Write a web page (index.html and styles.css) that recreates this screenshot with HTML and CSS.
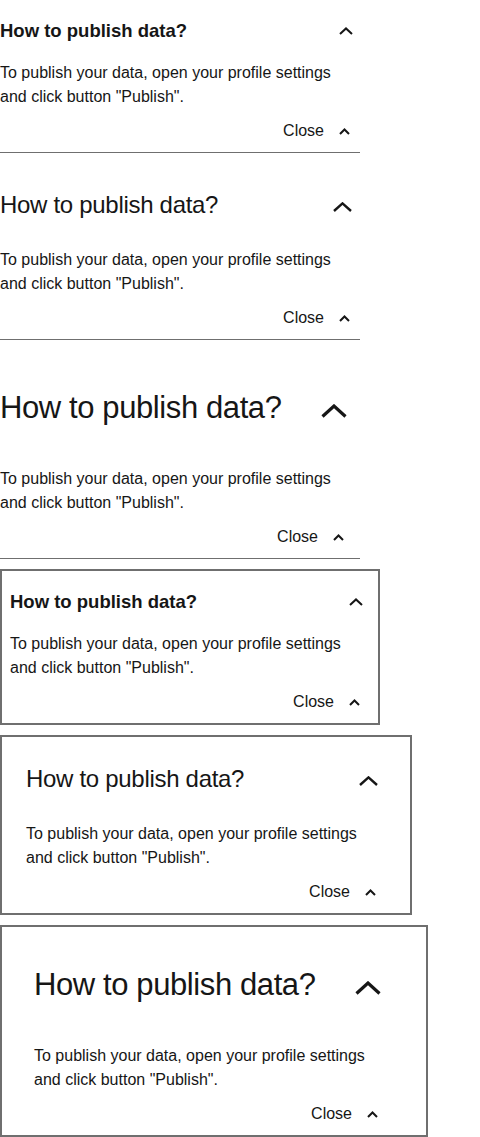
FILE: index.html
```html
<!DOCTYPE html>
<html lang="en">
<head>
<meta charset="utf-8">
<title>Accordion</title>
<link rel="stylesheet" href="styles.css">
</head>
<body>
<main class="page">
  <section class="acc acc--sm">
    <div class="acc__head">
      <h2 class="acc__title">How to publish data?</h2>
      <span class="acc__toggle"><svg width="14" height="8" viewBox="0 0 14 8"><path d="M1 7L7 1.4L13 7" fill="none" stroke="#161616" stroke-width="2"/></svg></span>
    </div>
    <p class="acc__body">To publish your data, open your profile settings and click button "Publish".</p>
    <div class="acc__foot"><span class="acc__close">Close</span><span class="acc__closeicon"><svg width="11" height="7" viewBox="0 0 11 7"><path d="M1 6L5.5 1.5L10 6" fill="none" stroke="#161616" stroke-width="2"/></svg></span></div>
  </section>

  <section class="acc acc--md">
    <div class="acc__head">
      <h2 class="acc__title">How to publish data?</h2>
      <span class="acc__toggle"><svg width="19" height="10" viewBox="0 0 19 10"><path d="M1 9L9.5 1.4L18 9" fill="none" stroke="#161616" stroke-width="2.4"/></svg></span>
    </div>
    <p class="acc__body">To publish your data, open your profile settings and click button "Publish".</p>
    <div class="acc__foot"><span class="acc__close">Close</span><span class="acc__closeicon"><svg width="11" height="7" viewBox="0 0 11 7"><path d="M1 6L5.5 1.5L10 6" fill="none" stroke="#161616" stroke-width="2"/></svg></span></div>
  </section>

  <section class="acc acc--lg">
    <div class="acc__head">
      <h2 class="acc__title">How to publish data?</h2>
      <span class="acc__toggle"><svg width="26" height="14" viewBox="0 0 26 14"><path d="M1.5 12.5L13 2L24.5 12.5" fill="none" stroke="#161616" stroke-width="3.2"/></svg></span>
    </div>
    <p class="acc__body">To publish your data, open your profile settings and click button "Publish".</p>
    <div class="acc__foot"><span class="acc__close">Close</span><span class="acc__closeicon"><svg width="11" height="7" viewBox="0 0 11 7"><path d="M1 6L5.5 1.5L10 6" fill="none" stroke="#161616" stroke-width="2"/></svg></span></div>
  </section>

  <section class="acc acc--sm acc--box">
    <div class="acc__head">
      <h2 class="acc__title">How to publish data?</h2>
      <span class="acc__toggle"><svg width="14" height="8" viewBox="0 0 14 8"><path d="M1 7L7 1.4L13 7" fill="none" stroke="#161616" stroke-width="2"/></svg></span>
    </div>
    <p class="acc__body">To publish your data, open your profile settings and click button "Publish".</p>
    <div class="acc__foot"><span class="acc__close">Close</span><span class="acc__closeicon"><svg width="11" height="7" viewBox="0 0 11 7"><path d="M1 6L5.5 1.5L10 6" fill="none" stroke="#161616" stroke-width="2"/></svg></span></div>
  </section>

  <section class="acc acc--md acc--box">
    <div class="acc__head">
      <h2 class="acc__title">How to publish data?</h2>
      <span class="acc__toggle"><svg width="19" height="10" viewBox="0 0 19 10"><path d="M1 9L9.5 1.4L18 9" fill="none" stroke="#161616" stroke-width="2.4"/></svg></span>
    </div>
    <p class="acc__body">To publish your data, open your profile settings and click button "Publish".</p>
    <div class="acc__foot"><span class="acc__close">Close</span><span class="acc__closeicon"><svg width="11" height="7" viewBox="0 0 11 7"><path d="M1 6L5.5 1.5L10 6" fill="none" stroke="#161616" stroke-width="2"/></svg></span></div>
  </section>

  <section class="acc acc--lg acc--box">
    <div class="acc__head">
      <h2 class="acc__title">How to publish data?</h2>
      <span class="acc__toggle"><svg width="26" height="14" viewBox="0 0 26 14"><path d="M1.5 12.5L13 2L24.5 12.5" fill="none" stroke="#161616" stroke-width="3.2"/></svg></span>
    </div>
    <p class="acc__body">To publish your data, open your profile settings and click button "Publish".</p>
    <div class="acc__foot"><span class="acc__close">Close</span><span class="acc__closeicon"><svg width="11" height="7" viewBox="0 0 11 7"><path d="M1 6L5.5 1.5L10 6" fill="none" stroke="#161616" stroke-width="2"/></svg></span></div>
  </section>
</main>
</body>
</html>
```

FILE: styles.css
```css
html, body {
  margin: 0;
  padding: 0;
  background: #ffffff;
}

body {
  font-family: "Liberation Sans", Arial, sans-serif;
  color: #161616;
}

.page {
  display: flex;
  flex-direction: column;
  align-items: flex-start;
  gap: 10px;
}

.acc {
  width: 360px;
  padding: 9px 0 7px;
  border-bottom: 1px solid #6f6f6f;
}

.acc--box {
  border: 2px solid #6f6f6f;
}

.acc--sm.acc--box { padding: 9px 8px 7px; }
.acc--md.acc--box { padding: 9px 24px 7px; }
.acc--lg.acc--box { padding: 9px 32px 7px; }

.acc__head {
  display: flex;
  align-items: center;
  justify-content: space-between;
  height: 44px;
}

.acc--md .acc__head {
  height: 70px;
  margin-top: -2px;
}

.acc--lg .acc__head {
  height: 102px;
  margin-top: -2px;
}

.acc__title {
  margin: 0;
  font-size: 18.5px;
  font-weight: 700;
  line-height: 24px;
}

.acc--md .acc__title {
  font-size: 24px;
  font-weight: 400;
  line-height: 32px;
  letter-spacing: -0.3px;
}

.acc--lg .acc__title {
  font-size: 31px;
  font-weight: 400;
  line-height: 40px;
  letter-spacing: -0.4px;
}

.acc__toggle {
  display: flex;
  align-items: center;
  justify-content: center;
  width: 28px;
  height: 28px;
}

.acc--md .acc__toggle {
  width: 36px;
  padding-top: 3px;
}

.acc--lg .acc__toggle {
  width: 52px;
  padding-top: 5px;
}

.acc__body {
  margin: 8px 0 0;
  font-size: 16px;
  line-height: 24px;
}

.acc__foot {
  display: flex;
  align-items: center;
  justify-content: flex-end;
  gap: 10px;
  height: 28px;
  margin-top: 8px;
  padding-right: 6px;
}

.acc--lg .acc__foot { padding-right: 12px; }

.acc__close {
  font-size: 16px;
  line-height: 24px;
}

.acc__closeicon {
  display: flex;
  align-items: center;
  justify-content: center;
  width: 20px;
  height: 20px;
}
```
